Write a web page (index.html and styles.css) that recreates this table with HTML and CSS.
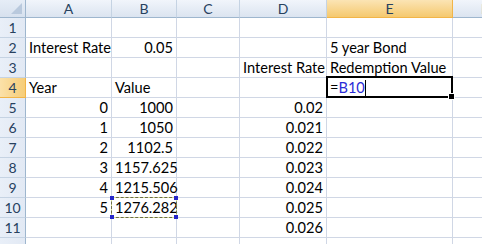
FILE: index.html
```html
<!DOCTYPE html>
<html>
<head>
<meta charset="utf-8">
<link rel="stylesheet" href="styles.css">
</head>
<body>
<div class="sheet">
  <div class="corner"><span class="tri"></span></div>
  <div class="ch">A</div><div class="ch">B</div><div class="ch">C</div><div class="ch">D</div><div class="ch sel">E</div><div class="ch last">F</div>

  <div class="rh">1</div><div class="c"></div><div class="c"></div><div class="c"></div><div class="c"></div><div class="c"></div><div class="c"></div>
  <div class="rh">2</div><div class="c">Interest Rate</div><div class="c num">0.05</div><div class="c"></div><div class="c"></div><div class="c">5 year Bond</div><div class="c"></div>
  <div class="rh">3</div><div class="c"></div><div class="c"></div><div class="c"></div><div class="c">Interest Rate</div><div class="c">Redemption Value</div><div class="c"></div>
  <div class="rh sel">4</div><div class="c">Year</div><div class="c">Value</div><div class="c"></div><div class="c"></div><div class="c edit">=<span class="ref">B10</span><span class="caret"></span></div><div class="c"></div>
  <div class="rh">5</div><div class="c num">0</div><div class="c num">1000</div><div class="c"></div><div class="c num">0.02</div><div class="c"></div><div class="c"></div>
  <div class="rh">6</div><div class="c num">1</div><div class="c num">1050</div><div class="c"></div><div class="c num">0.021</div><div class="c"></div><div class="c"></div>
  <div class="rh">7</div><div class="c num">2</div><div class="c num">1102.5</div><div class="c"></div><div class="c num">0.022</div><div class="c"></div><div class="c"></div>
  <div class="rh">8</div><div class="c num">3</div><div class="c num">1157.625</div><div class="c"></div><div class="c num">0.023</div><div class="c"></div><div class="c"></div>
  <div class="rh">9</div><div class="c num">4</div><div class="c num">1215.506</div><div class="c"></div><div class="c num">0.024</div><div class="c"></div><div class="c"></div>
  <div class="rh">10</div><div class="c num">5</div><div class="c num">1276.282</div><div class="c"></div><div class="c num">0.025</div><div class="c"></div><div class="c"></div>
  <div class="rh">11</div><div class="c"></div><div class="c"></div><div class="c"></div><div class="c num">0.026</div><div class="c"></div><div class="c"></div>
  <div class="rh"></div><div class="c"></div><div class="c"></div><div class="c"></div><div class="c"></div><div class="c"></div><div class="c"></div>

  <div class="active"><span class="handle"></span></div>
  <div class="refbox">
    <span class="dot tl"></span><span class="dot tr"></span><span class="dot bl"></span><span class="dot br"></span>
  </div>
</div>
</body>
</html>
```
FILE: styles.css
```css
html, body {
  margin: 0;
  padding: 0;
  background: #ffffff;
  overflow: hidden;
}
.sheet {
  position: relative;
  display: grid;
  grid-template-columns: 26px 86px 65px 63px 87px 126px 64px;
  grid-template-rows: 18px repeat(12, 20px);
  font-family: "Lato", "Open Sans", sans-serif;
  font-size: 14.6px;
  color: #000;
  width: 482px;
  height: 244px;
  overflow: hidden;
}
.sheet > div {
  box-sizing: border-box;
}
.corner {
  background: linear-gradient(#e6edf7, #d7e1ee);
  border-right: 1px solid #9eb6ce;
  border-bottom: 1px solid #9eb6ce;
  position: relative;
}
.tri {
  position: absolute;
  right: 3px;
  bottom: 3px;
  width: 0;
  height: 0;
  border-left: 11px solid transparent;
  border-bottom: 11px solid #b9c9dd;
}
.ch {
  background: linear-gradient(#f1f5fb, #dbe4f0);
  border-right: 1px solid #c5d3e3;
  border-bottom: 1px solid #9eb6ce;
  color: #27415f;
  text-align: center;
  line-height: 17px;
  font-size: 14px;
}
.ch.sel {
  background: linear-gradient(#fbe4b4, #f5c96f);
  border-right-color: #f2b548;
  border-bottom-color: #f2b548;
}
.ch.last {
  border-right: none;
}
.rh {
  background: linear-gradient(90deg, #e9eff8, #e2e9f4);
  border-right: 1px solid #9eb6ce;
  border-bottom: 1px solid #c5d3e3;
  color: #27415f;
  text-align: center;
  line-height: 19px;
  font-size: 14px;
}
.rh.sel {
  background: linear-gradient(90deg, #fbe1a9, #f6cd78);
  border-bottom-color: #f2b548;
  border-right-color: #f2b548;
}
.c {
  border-right: 1px solid #d0d7e5;
  border-bottom: 1px solid #d0d7e5;
  padding: 0 3px;
  line-height: 20px;
  white-space: nowrap;
  overflow: visible;
}
.num {
  text-align: right;
}
.ref {
  color: #2b2bd6;
}
.caret {
  display: inline-block;
  width: 1px;
  height: 16px;
  background: #000;
  vertical-align: -3px;
}
.active {
  position: absolute;
  left: 326px;
  top: 76px;
  width: 127px;
  height: 22px;
  border: 2px solid #000;
  box-sizing: border-box;
}
.handle {
  position: absolute;
  right: -4px;
  bottom: -4px;
  width: 5px;
  height: 5px;
  background: #000;
  border: 1px solid #fff;
}
.refbox {
  position: absolute;
  left: 111px;
  top: 197px;
  width: 66px;
  height: 21px;
  box-sizing: border-box;
  border: 1px dashed #1c1c7a;
  outline: 1px solid rgba(255, 255, 0, 0.35);
  outline-offset: -1px;
}
.dot {
  position: absolute;
  width: 4px;
  height: 4px;
  background: #2626c8;
}
.tl { left: -2px; top: -2px; }
.tr { right: -2px; top: -2px; }
.bl { left: -2px; bottom: -2px; }
.br { right: -2px; bottom: -2px; }
```
